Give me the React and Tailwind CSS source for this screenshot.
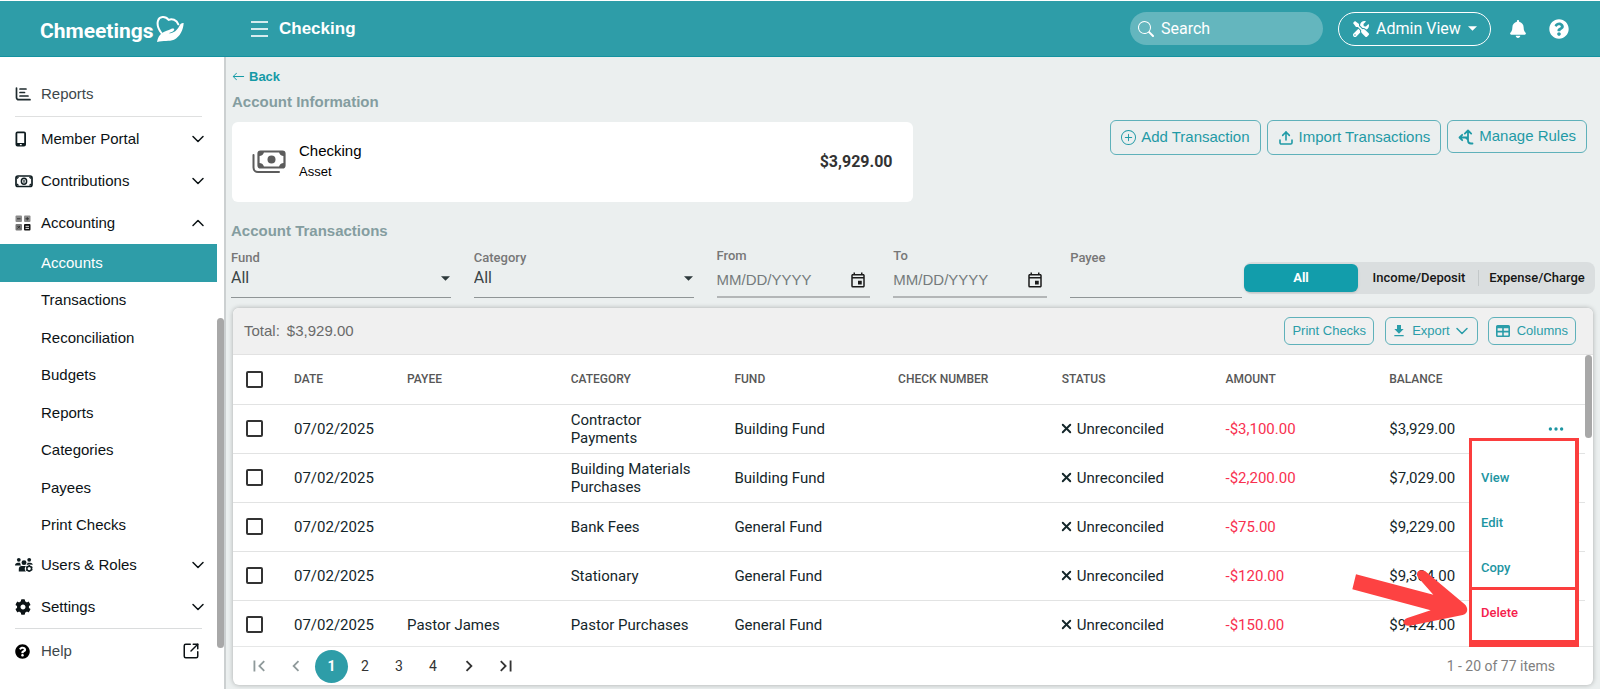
import { ChevronDown, ChevronUp, SquareArrowOutUpRight, Upload, X } from 'lucide-react';
import { BsArrowLeft, BsPlusCircle, BsSearch, BsThreeDots } from 'react-icons/bs';
import { FaBell, FaCog, FaQuestionCircle, FaTools } from 'react-icons/fa';
import { MdFileDownload, MdFirstPage, MdLastPage, MdChevronLeft, MdChevronRight, MdOutlineEvent } from 'react-icons/md';

const subItems = ['Accounts', 'Transactions', 'Reconciliation', 'Budgets', 'Reports', 'Categories', 'Payees', 'Print Checks'];

const columns = ['Date', 'Payee', 'Category', 'Fund', 'Check Number', 'Status', 'Amount', 'Balance'];

const rows = [
  { date: '07/02/2025', payee: '', category: 'Contractor Payments', fund: 'Building Fund', amount: '-$3,100.00', balance: '$3,929.00' },
  { date: '07/02/2025', payee: '', category: 'Building Materials Purchases', fund: 'Building Fund', amount: '-$2,200.00', balance: '$7,029.00' },
  { date: '07/02/2025', payee: '', category: 'Bank Fees', fund: 'General Fund', amount: '-$75.00', balance: '$9,229.00' },
  { date: '07/02/2025', payee: '', category: 'Stationary', fund: 'General Fund', amount: '-$120.00', balance: '$9,304.00' },
  { date: '07/02/2025', payee: 'Pastor James', category: 'Pastor Purchases', fund: 'General Fund', amount: '-$150.00', balance: '$9,424.00' }
];

function HeartHandLogo() {
  return (
    <svg viewBox="0 0 84 84" className="ml-0.5 h-7 w-7" fill="none" stroke="white" strokeLinecap="round" strokeLinejoin="round">
      <path strokeWidth="6" d="M16 54C7 42 3 27 6 17C10 4 28 2 38 15C47 10 62 14 67 28" />
      <path
        fill="white"
        stroke="none"
        d="M3 81C5 69 10 60 18 54C27 48 37 47 45 42C51 39 57 41 54 46C51 51 45 52 38 55C54 55 64 45 70 33C73 27 77 23 83 24C82 44 72 66 54 74C40 80 22 75 3 81Z"
      />
    </svg>
  );
}

function ReportsIcon() {
  return (
    <svg viewBox="0 0 18 18" className="h-[18px] w-[18px]" fill="none" stroke="#1f2b2e" strokeWidth="1.7" strokeLinecap="round">
      <path d="M1.5 3v9.5a2.2 2.2 0 0 0 2.2 2.2H15M5 4h6M5 7.5h4.5M5 11h8" />
    </svg>
  );
}

function TabletIcon() {
  return (
    <svg viewBox="0 0 18 18" className="h-[18px] w-[18px]">
      <path
        fill="#0f1c20"
        fillRule="evenodd"
        d="M2.500 1.500h6.500a2 2 0 0 1 2 2v11a2 2 0 0 1-2 2H2.500a2 2 0 0 1-2-2V3.500A2 2 0 0 1 2.500 1.500ZM2.300 3.300v9.700h6.900V3.300ZM4.900 14.100v1.200h1.800V14.100Z"
      />
    </svg>
  );
}

function CashIcon() {
  return (
    <svg viewBox="0 0 18 18" className="h-[18px] w-[18px]" fill="none" stroke="#0f1c20">
      <rect x="1" y="4" width="16" height="10.500" rx="2" strokeWidth="1.700" />
      <ellipse cx="9" cy="9.200" rx="2.600" ry="3" strokeWidth="1.500" />
      <path d="M9 7.800v3" strokeWidth="1.200" />
      <path d="M2 6.500 3.500 5M16 6.500 14.500 5M2 12l1.500 1.500M16 12l-1.500 1.500" strokeWidth="1.200" />
    </svg>
  );
}

function AccountingIcon() {
  return (
    <svg viewBox="0 0 18 18" className="h-[18px] w-[18px]">
      <rect x="0.500" y="1.500" width="6.500" height="6.500" rx="1" fill="#8b8b8b" />
      <rect x="9" y="1.500" width="6.500" height="6.500" rx="1" fill="#8b8b8b" />
      <rect x="0.500" y="10" width="6.500" height="6.500" rx="1" fill="#777" />
      <rect x="9" y="10" width="6.500" height="6.500" rx="1" fill="#111" />
      <path d="M2 4.800h3.500M10.500 4.800h3.500M12.250 3.200v3.200M2.500 12l2.500 2.500M5 12l-2.500 2.500" stroke="#333" strokeWidth="1" />
      <path d="M10.500 12.300h3.500M10.500 14.400h3.500" stroke="white" strokeWidth="0.900" />
    </svg>
  );
}

function UsersIcon() {
  return (
    <svg viewBox="0 0 19 18" className="h-[18px] w-[19px]" fill="#0f1c20">
      <circle cx="4" cy="3.500" r="2" />
      <circle cx="15" cy="3.500" r="2" />
      <circle cx="9.500" cy="6.500" r="2.600" />
      <path d="M0 9.500C0 7.500 1.500 6.500 3 6.500h2.500C5.500 8 6 9 7 9.500ZM12 9c.8-.6 1.200-1.500 1.200-2.500H16c1.500 0 2.500 1 2.800 2.200L15 8.500ZM4 15.800v-2.500C4 11.300 5.200 10 7 10h4.500a4 4 0 0 0 0 5.800Z" />
      <circle cx="15" cy="12.800" r="2.500" fill="none" stroke="#0f1c20" strokeWidth="1.600" />
      <path d="M15 9v1M15 15.500v1M11.700 11l.9.500M17.400 14l.9.500M11.700 14.600l.9-.5M17.400 11.600l.9-.5" stroke="#0f1c20" strokeWidth="1.500" />
    </svg>
  );
}

function BanknotesIcon() {
  return (
    <svg viewBox="0 0 34 24" className="h-6 w-[34px]" fill="none" stroke="#5c5c5c">
      <path strokeWidth="2" strokeLinecap="round" d="M1.500 5v12.500a4.500 4.500 0 0 0 4.500 4.500H27" />
      <rect x="6.500" y="1.500" width="26" height="16" rx="2" strokeWidth="2.200" />
      <circle cx="19.500" cy="9.500" r="4" fill="#5c5c5c" stroke="none" />
      <path fill="#5c5c5c" stroke="none" d="M7 2h5a5 5 0 0 1-5 4ZM32 2h-5a5 5 0 0 0 5 4ZM7 17h5a5 5 0 0 0-5-4ZM32 17h-5a5 5 0 0 1 5-4Z" />
    </svg>
  );
}

function RulesIcon() {
  return (
    <svg viewBox="0 0 16 16" className="h-4 w-4" fill="none" stroke="currentColor" strokeWidth="1.800" strokeLinecap="round" strokeLinejoin="round">
      <path d="M10 2v9.500a3 3 0 0 0 3 3h1.500M6.800 4.600 10 1.500l3.200 3.100M10 8.500H2M4.200 5.800 1.500 8.500l2.700 2.700M10 10.500 7.500 8.500" />
    </svg>
  );
}

function ColumnsIcon() {
  return (
    <svg viewBox="0 0 14 12" className="h-3 w-3.5">
      <path
        fill="currentColor"
        fillRule="evenodd"
        d="M1.500 0h11A1.500 1.500 0 0 1 14 1.500v9a1.500 1.500 0 0 1-1.500 1.500h-11A1.500 1.500 0 0 1 0 10.500v-9A1.500 1.500 0 0 1 1.500 0ZM1.600 3.300v2.500h4.600V3.300ZM7.800 3.300v2.500h4.600V3.300ZM1.600 7.500v2.900h4.600V7.500ZM7.800 7.500v2.900h4.600V7.500Z"
      />
    </svg>
  );
}

function Caret({ className }) {
  return (
    <svg viewBox="0 0 10 5" className={className}>
      <path d="M0 0h10L5 5Z" fill="currentColor" />
    </svg>
  );
}

function Header() {
  return (
    <header className="flex h-[57px] items-center border-t border-b border-t-white border-b-[#1492a0] bg-[#2e9da8] text-white">
      <a href="#" className="flex w-[226px] shrink-0 items-center pl-10 font-['Roboto',sans-serif] text-[21px] leading-7 font-bold">
        <span className="pt-1">Chmeetings</span>
        <HeartHandLogo />
      </a>
      <button aria-label="Toggle menu" className="ml-[25px] flex w-[17px] flex-col gap-[5px]">
        <span className="h-[2px] w-full bg-white/80" />
        <span className="h-[2px] w-full bg-white/80" />
        <span className="h-[2px] w-full bg-white/80" />
      </button>
      <h1 className="ml-[11px] text-[17px] font-bold">Checking</h1>

      <div className="ml-auto flex items-center pr-[31px] font-['Roboto',sans-serif]">
        <label className="flex h-[33px] w-[193px] items-center gap-[7px] rounded-full bg-[#64b6be] pl-2">
          <BsSearch size={16} className="shrink-0" />
          <input aria-label="Search" placeholder="Search" className="w-full bg-transparent text-[16px] placeholder:text-white outline-none" />
        </label>
        <button className="ml-[15px] flex h-[34px] w-[153px] items-center rounded-full border border-white pl-[14px] text-[16px]">
          <FaTools size={16} />
          <span className="ml-[7px]">Admin View</span>
          <Caret className="ml-[7px] h-[5px] w-[9px]" />
        </button>
        <button aria-label="Notifications" className="ml-[18px]">
          <FaBell size={18} />
        </button>
        <button aria-label="Help" className="ml-[22px]">
          <FaQuestionCircle size={20} />
        </button>
      </div>
    </header>
  );
}

function SideLink({ icon, label, chevron, muted, tall, trailing }) {
  return (
    <a href="#" className={`flex items-center gap-2 pl-[15px] pr-[9px] ${tall ? 'h-11' : 'h-[42px]'} ${muted ? 'text-[#3d474a]' : 'text-[#0c1215]'}`}>
      <span className="flex w-[18px] shrink-0">{icon}</span>
      <span className="flex-1">{label}</span>
      {chevron === 'down' && <ChevronDown size={20} strokeWidth={1.8} />}
      {chevron === 'up' && <ChevronUp size={20} strokeWidth={1.8} />}
      {trailing}
    </a>
  );
}

function Sidebar() {
  return (
    <aside className="flex w-[226px] shrink-0 border-r-2 border-[#ccd0d1] bg-white text-[15px]">
      <nav className="flex-1 pt-[15px]">
        <SideLink icon={<ReportsIcon />} label="Reports" muted tall />
        <hr className="mx-[15px] mb-px border-t border-[#dfe0e0]" />
        <SideLink icon={<TabletIcon />} label="Member Portal" chevron="down" />
        <SideLink icon={<CashIcon />} label="Contributions" chevron="down" />
        <SideLink icon={<AccountingIcon />} label="Accounting" chevron="up" />
        <ul className="grid h-[300px] grid-rows-8">
          {subItems.map((item, i) => (
            <li key={item} className={i === 0 ? 'bg-[#2e9da8] text-white' : 'text-[#0c1215]'}>
              <a href="#" className="flex h-full items-center pl-[41px]">
                {item}
              </a>
            </li>
          ))}
        </ul>
        <SideLink icon={<UsersIcon />} label="Users & Roles" chevron="down" />
        <SideLink icon={<FaCog size={16} />} label="Settings" chevron="down" />
        <hr className="mx-[15px] border-t border-[#dadcdd]" />
        <SideLink
          icon={<FaQuestionCircle size={15} className="text-black" />}
          label="Help"
          muted
          tall
          trailing={<SquareArrowOutUpRight size={18} strokeWidth={2} className="mr-2 text-[#0c1215]" />}
        />
      </nav>
      <div className="mt-[261px] h-[330px] w-[7px] rounded-full bg-[#a8a8a8]" />
    </aside>
  );
}

function AccountInfo() {
  const btn = 'flex items-center gap-[5px] rounded-md border border-[#5fb1ba] px-[10px] text-[#1f9aa6]';
  return (
    <section>
      <h2 className="h-[33px] pl-px text-[15px] leading-[30px] font-bold text-[#849da0]">Account Information</h2>
      <div className="flex items-start justify-between pl-px">
        <div className="mt-0.5 flex h-20 w-1/2 items-center rounded-md bg-white px-5">
          <BanknotesIcon />
          <div className="ml-[13px] flex-1 pb-0.5 text-black">
            <div className="text-[15px] leading-[22px]">Checking</div>
            <div className="text-[13px] leading-5">Asset</div>
          </div>
          <div className="font-['Roboto',sans-serif] text-[16px] font-bold text-[#333]">$3,929.00</div>
        </div>
        <div className="flex items-start gap-[6px] pr-[6px] text-[15px]">
          <button className={`${btn} h-[35px]`}>
            <BsPlusCircle size={15} />
            Add Transaction
          </button>
          <button className={`${btn} h-[35px]`}>
            <Upload size={16} strokeWidth={2.4} />
            Import Transactions
          </button>
          <button className={`${btn} h-[33px]`}>
            <RulesIcon />
            Manage Rules
          </button>
        </div>
      </div>
    </section>
  );
}

function SelectField({ id, label }) {
  return (
    <div className="border-b border-[#8f9596]">
      <label htmlFor={id} className="block font-['Roboto',sans-serif] text-[13px] leading-[18px] font-medium text-[#777]">
        {label}
      </label>
      <div className="flex items-center pb-2">
        <select id={id} className="h-[22px] flex-1 appearance-none bg-transparent font-['Roboto',sans-serif] text-[16px] leading-[22px] text-[#3a4547]">
          <option>All</option>
        </select>
        <Caret className="mr-px h-[5px] w-[9px] text-[#2d393b]" />
      </div>
    </div>
  );
}

function DateField({ id, label }) {
  return (
    <div className="border-b-2 border-[#b3b6b7]">
      <label htmlFor={id} className="block font-['Roboto',sans-serif] text-[13px] leading-4 font-medium text-[#777]">
        {label}
      </label>
      <div className="flex h-8 items-center">
        <input id={id} placeholder="MM/DD/YYYY" className="w-full min-w-0 bg-transparent text-[15px] outline-none placeholder:text-[#757b7c]" />
        <MdOutlineEvent size={18} className="mr-[3px] shrink-0 text-[#1b1b1b]" />
      </div>
    </div>
  );
}

function Filters() {
  return (
    <section className="mt-[18px]">
      <h2 className="text-[15px] leading-[22px] font-bold text-[#849da0]">Account Transactions</h2>
      <div className="mt-[6px] -mr-0.5 flex items-end gap-0.5">
        <div className="grid flex-1 grid-cols-[220fr_220fr_154fr_154fr_172fr] items-end gap-x-[23px]">
          <SelectField id="fund" label="Fund" />
          <SelectField id="category" label="Category" />
          <DateField id="from" label="From" />
          <DateField id="to" label="To" />
          <div className="border-b border-[#8f9596]">
            <label htmlFor="payee" className="block font-['Roboto',sans-serif] text-[13px] leading-[18px] font-medium text-[#777]">
              Payee
            </label>
            <input id="payee" className="block h-[30px] w-full bg-transparent text-[15px] outline-none" />
          </div>
        </div>
        <div className="mb-1 flex h-8 w-[351px] items-center rounded-lg bg-[#dadedf] font-['Roboto',sans-serif] text-[13px] font-medium text-[#161616]">
          <button className="h-7 w-[114px] rounded-md bg-[#129dab] font-bold text-white shadow">All</button>
          <button className="h-7 flex-1 pl-0.5">Income/Deposit</button>
          <span className="h-4 w-px bg-[#c3c8c9]" />
          <button className="h-7 w-[116px]">Expense/Charge</button>
        </div>
      </div>
    </section>
  );
}

function RowMenu() {
  return (
    <>
      <div className="absolute top-[130px] right-[14px] h-[209px] w-[110px] bg-white pt-[17px] font-['Roboto',sans-serif] text-[13px] font-medium text-[#1d95a2]">
        <button className="block h-[45px] w-full pl-3 text-left">View</button>
        <button className="block h-[45px] w-full pl-3 text-left">Edit</button>
        <button className="block h-[45px] w-full pl-3 text-left">Copy</button>
        <button className="block h-[45px] w-full pl-3 text-left text-[#f5204c]">Delete</button>
      </div>
      <div className="pointer-events-none absolute top-[130px] right-[14px] h-[152px] w-[110px] border-[3px] border-r-4 border-[#fb3e3e]" />
      <div className="pointer-events-none absolute top-[279px] right-[14px] h-[60px] w-[110px] border-[3px] border-r-4 border-b-[7px] border-[#fb3e3e]" />
      <svg viewBox="396 658 348 174" className="pointer-events-none absolute top-[261px] right-[125px] h-[58px] w-[116px]" fill="#fd4242">
        <path d="M408 674L640 735L595 684C583 668 600 655 616 665L734 764C746 776 744 792 728 796L570 828C549 831 544 812 562 805L632 782L397 719Z" />
      </svg>
    </>
  );
}

function Checkbox({ label }) {
  return <input type="checkbox" aria-label={label} className="block h-[17px] w-[17px] appearance-none rounded-[2px] border-2 border-[#333] bg-white" />;
}

function TransactionsTable() {
  const btn = 'flex h-7 items-center rounded-md border border-[#5fb1ba] px-[7px] text-[#2b9da9]';
  return (
    <section className="relative mt-[10px] ml-[2px] overflow-hidden rounded-md bg-white shadow-[0_0_5px_rgba(0,0,0,0.28)]">
      <div className="flex h-[47px] items-center border-b border-[#e2e2e2] bg-[#f0f0f0] pr-[17px] pl-[11px] text-[13px]">
        <span className="text-[15px] text-[#6a6a6a]">Total:</span>
        <span className="ml-[7px] flex-1 text-[15px] text-[#6a6a6a]">$3,929.00</span>
        <button className={btn}>Print Checks</button>
        <button className={`${btn} ml-[11px]`}>
          <MdFileDownload size={16} className="mr-[5px] -ml-0.5" />
          Export
          <ChevronDown size={20} strokeWidth={1.8} className="-mr-0.5 ml-0.5" />
        </button>
        <button className={`${btn} ml-[10px]`}>
          <span className="mr-[7px]">
            <ColumnsIcon />
          </span>
          Columns
        </button>
      </div>

      <div className="flex h-[291px] overflow-hidden font-['Roboto',sans-serif]">
        <div className="flex-1">
          <table className="w-full table-fixed border-collapse text-left text-[15px] leading-[18px] text-[#14262a]">
            <thead>
              <tr className="h-[49px] border-b border-[#e2e3e3] text-[12px] text-[#575757] uppercase">
                <th className="w-[49px] pl-[13px]">
                  <Checkbox label="Select all" />
                </th>
                {columns.map((c) => (
                  <th key={c} className={`pl-3 font-medium ${c === 'Date' ? 'w-[113px]' : ''}`}>
                    {c}
                  </th>
                ))}
                <th className="w-[44px]" />
              </tr>
            </thead>
            <tbody>
              {rows.map((r, i) => (
                <tr key={r.balance} className="h-[49px] border-b border-[#e2e3e3]">
                  <td className="pl-[13px]">
                    <Checkbox label={`Select transaction ${i + 1}`} />
                  </td>
                  <td className="pl-3">{r.date}</td>
                  <td className="pl-3">{r.payee}</td>
                  <td className="pr-6 pl-3">{r.category}</td>
                  <td className="pl-3">{r.fund}</td>
                  <td />
                  <td className="pl-3">
                    <span className="flex items-center gap-[3px]">
                      <X size={15} strokeWidth={3} className="-ml-[3px]" />
                      Unreconciled
                    </span>
                  </td>
                  <td className="pl-3 text-[#f8304f]">{r.amount}</td>
                  <td className="pl-3">{r.balance}</td>
                  <td>
                    {i === 0 && (
                      <button aria-label="Row actions" className="block pl-1.5 text-[#1d95a2]">
                        <BsThreeDots size={18} />
                      </button>
                    )}
                  </td>
                </tr>
              ))}
            </tbody>
          </table>
        </div>
        <div className="mr-px h-[83px] w-[7px] rounded-full bg-[#a8a8a8]" />
      </div>

      <footer className="flex h-[39px] items-center border-t border-[#e6e7e7] pr-[38px] pl-2 font-['Roboto',sans-serif] text-[14px] text-[#333]">
        <button aria-label="First page" className="flex w-[36px] justify-center text-[#8f9a9b]">
          <MdFirstPage size={22} />
        </button>
        <button aria-label="Previous page" className="flex w-[38px] justify-center text-[#8f9a9b]">
          <MdChevronLeft size={22} />
        </button>
        <button className="h-[33px] w-[33px] rounded-full bg-[#2e9da8] font-bold text-white">1</button>
        <button className="w-[34px]">2</button>
        <button className="w-[34px]">3</button>
        <button className="w-[34px]">4</button>
        <button aria-label="Next page" className="flex w-[37px] justify-center">
          <MdChevronRight size={22} />
        </button>
        <button aria-label="Last page" className="flex w-[37px] justify-center">
          <MdLastPage size={22} />
        </button>
        <span className="ml-auto text-[#808080]">1 - 20 of 77 items</span>
      </footer>

      <RowMenu />
    </section>
  );
}

export default function App() {
  return (
    <div className="flex min-h-screen flex-col bg-[#ebefef] font-['Liberation_Sans',Arial,sans-serif]">
      <Header />
      <div className="flex flex-1">
        <Sidebar />
        <main className="min-w-0 flex-1 pt-[9px] pr-[7px] pb-1 pl-[5px]">
          <a href="#" className="flex h-[21px] items-center gap-1 pl-px text-[13px] font-bold text-[#159aa6]">
            <BsArrowLeft size={13} />
            Back
          </a>
          <AccountInfo />
          <Filters />
          <TransactionsTable />
        </main>
      </div>
    </div>
  );
}
